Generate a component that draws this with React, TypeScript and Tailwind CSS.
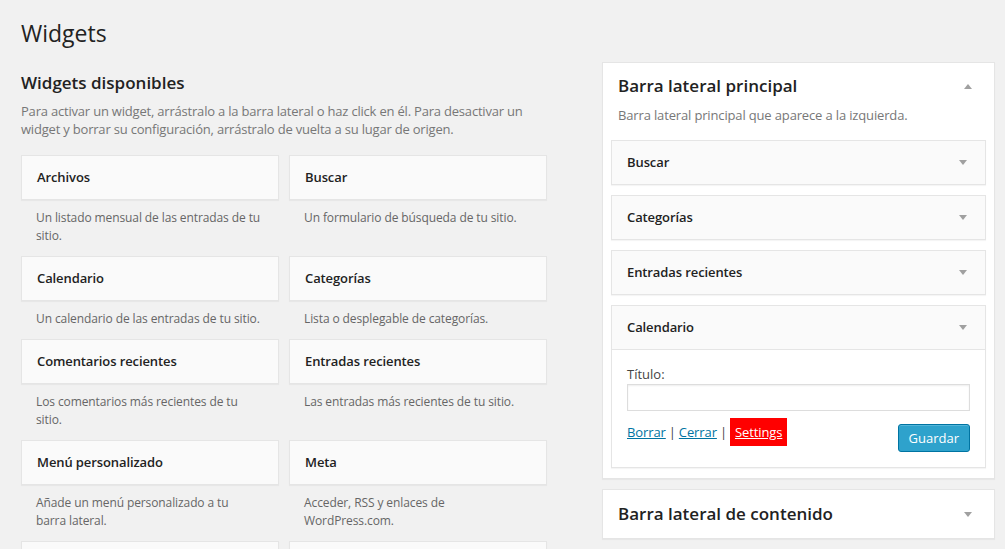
import React from "react";

const widgets: { title: string; desc: string[] }[] = [
  { title: "Archivos", desc: ["Un listado mensual de las entradas de tu", "sitio."] },
  { title: "Buscar", desc: ["Un formulario de búsqueda de tu sitio."] },
  { title: "Calendario", desc: ["Un calendario de las entradas de tu sitio."] },
  { title: "Categorías", desc: ["Lista o desplegable de categorías."] },
  { title: "Comentarios recientes", desc: ["Los comentarios más recientes de tu", "sitio."] },
  { title: "Entradas recientes", desc: ["Las entradas más recientes de tu sitio."] },
  { title: "Menú personalizado", desc: ["Añade un menú personalizado a tu", "barra lateral."] },
  { title: "Meta", desc: ["Acceder, RSS y enlaces de", "WordPress.com."] },
];

function ArrowDown() {
  return (
    <svg width="8" height="5" viewBox="0 0 8 5" className="block">
      <path d="M0 0 H8 L4 5 Z" fill="#a0a0a0" />
    </svg>
  );
}

function ArrowUp() {
  return (
    <svg width="8" height="5" viewBox="0 0 8 5" className="block">
      <path d="M0 5 H8 L4 0 Z" fill="#a0a0a0" />
    </svg>
  );
}

function SidebarWidget({ title }: { title: string }) {
  return (
    <div className="mb-[10px] flex h-[45px] items-center justify-between border border-[#e5e5e5] bg-[#fafafa] pl-[15px] pr-[18px] shadow-[0_1px_1px_rgba(0,0,0,0.04)]">
      <span className="-mt-[1px] font-semibold tracking-[-0.1px] text-[#222]">{title}</span>
      <ArrowDown />
    </div>
  );
}

export default function App() {
  return (
    <div
      className="h-[549px] w-[1005px] overflow-hidden bg-[#f1f1f1] text-[13px] leading-[18px] text-[#444]"
      style={{ fontFamily: '"Open Sans", "Noto Sans", sans-serif' }}
    >
      <div className="flex pl-[21px]">
        {/* Left column */}
        <div className="w-[526px]">
          <h1 className="mt-[19px] text-[23px] font-normal leading-[29px] text-[#222]">Widgets</h1>
          <h2 className="mt-[24px] text-[17px] font-semibold leading-[22px] text-[#222]">
            Widgets disponibles
          </h2>
          <p className="mt-[8px] whitespace-nowrap leading-[18px] tracking-[-0.2px] text-[#777]">
            Para activar un widget, arrástralo a la barra lateral o haz click en él. Para desactivar un
            <br />
            widget y borrar su configuración, arrástralo de vuelta a su lugar de origen.
          </p>
          <div className="mt-[17px] grid grid-cols-[258px_258px] gap-x-[10px]">
            {widgets.map((w) => (
              <div key={w.title}>
                <div className="flex h-[45px] items-center border border-[#e5e5e5] bg-[#fafafa] px-[15px] font-semibold tracking-[-0.1px] text-[#222] shadow-[0_1px_1px_rgba(0,0,0,0.04)]">
                  <span className="-mt-[1px]">{w.title}</span>
                </div>
                <p className="whitespace-nowrap px-[15px] pb-[11px] pt-[9px] text-[12px] leading-[18px] tracking-[-0.1px] text-[#666]">
                  {w.desc.map((line, i) => (
                    <React.Fragment key={i}>
                      {i > 0 && <br />}
                      {line}
                    </React.Fragment>
                  ))}
                </p>
              </div>
            ))}
            <div className="h-[45px] border border-[#e5e5e5] bg-[#fafafa] shadow-[0_1px_1px_rgba(0,0,0,0.04)]" />
            <div className="h-[45px] border border-[#e5e5e5] bg-[#fafafa] shadow-[0_1px_1px_rgba(0,0,0,0.04)]" />
          </div>
        </div>

        {/* Right column */}
        <div className="ml-[55px] w-[393px] pt-[62px]">
          <div className="border border-[#e5e5e5] bg-white shadow-[0_1px_1px_rgba(0,0,0,0.04)]">
            <div className="flex items-center justify-between pl-[15px] pr-[22px] pt-[10px]">
              <h3 className="text-[17px] font-semibold leading-[26px] text-[#222]">Barra lateral principal</h3>
              <ArrowUp />
            </div>
            <p className="mt-[7px] px-[15px] tracking-[-0.15px] text-[#777]">
              Barra lateral principal que aparece a la izquierda.
            </p>
            <div className="mt-[16px] px-[8px] pb-[10px]">
              <SidebarWidget title="Buscar" />
              <SidebarWidget title="Categorías" />
              <SidebarWidget title="Entradas recientes" />
              <div className="border border-[#e5e5e5] bg-white shadow-[0_1px_1px_rgba(0,0,0,0.04)]">
                <div className="flex h-[44px] items-center justify-between border-b border-[#e5e5e5] bg-[#fafafa] pl-[15px] pr-[18px]">
                  <span className="-mt-[1px] font-semibold tracking-[-0.1px] text-[#222]">Calendario</span>
                  <ArrowDown />
                </div>
                <div className="px-[15px] pb-[15px] pt-[15px]">
                  <label className="block text-[#444]">Título:</label>
                  <div className="mt-[1px] h-[27px] w-full border border-[#ddd] bg-white shadow-[inset_0_1px_2px_rgba(0,0,0,0.07)]" />
                  <div className="flex items-start justify-between">
                    <div className="mt-[7px] flex h-[28px] items-center leading-[28px] tracking-[-0.1px]">
                      <span className="text-[#0074a2] underline">Borrar</span>
                      <span className="mx-[3px] text-[#444]">|</span>
                      <span className="text-[#0074a2] underline">Cerrar</span>
                      <span className="mx-[3px] text-[#444]">|</span>
                      <span className="bg-[#ff0000] px-[5px] text-white underline">Settings</span>
                    </div>
                    <button className="mt-[13px] h-[28px] rounded-[3px] border border-[#0074a2] bg-[#2ea2cc] px-[10px] leading-[26px] text-white shadow-[inset_0_1px_0_rgba(120,200,230,0.5)]">
                      Guardar
                    </button>
                  </div>
                </div>
              </div>
            </div>
          </div>

          <div className="mt-[10px] flex h-[50px] items-center justify-between border border-[#e5e5e5] bg-white pl-[15px] pr-[22px] shadow-[0_1px_1px_rgba(0,0,0,0.04)]">
            <h3 className="text-[17px] font-semibold leading-[26px] text-[#222]">Barra lateral de contenido</h3>
            <ArrowDown />
          </div>
        </div>
      </div>
    </div>
  );
}
